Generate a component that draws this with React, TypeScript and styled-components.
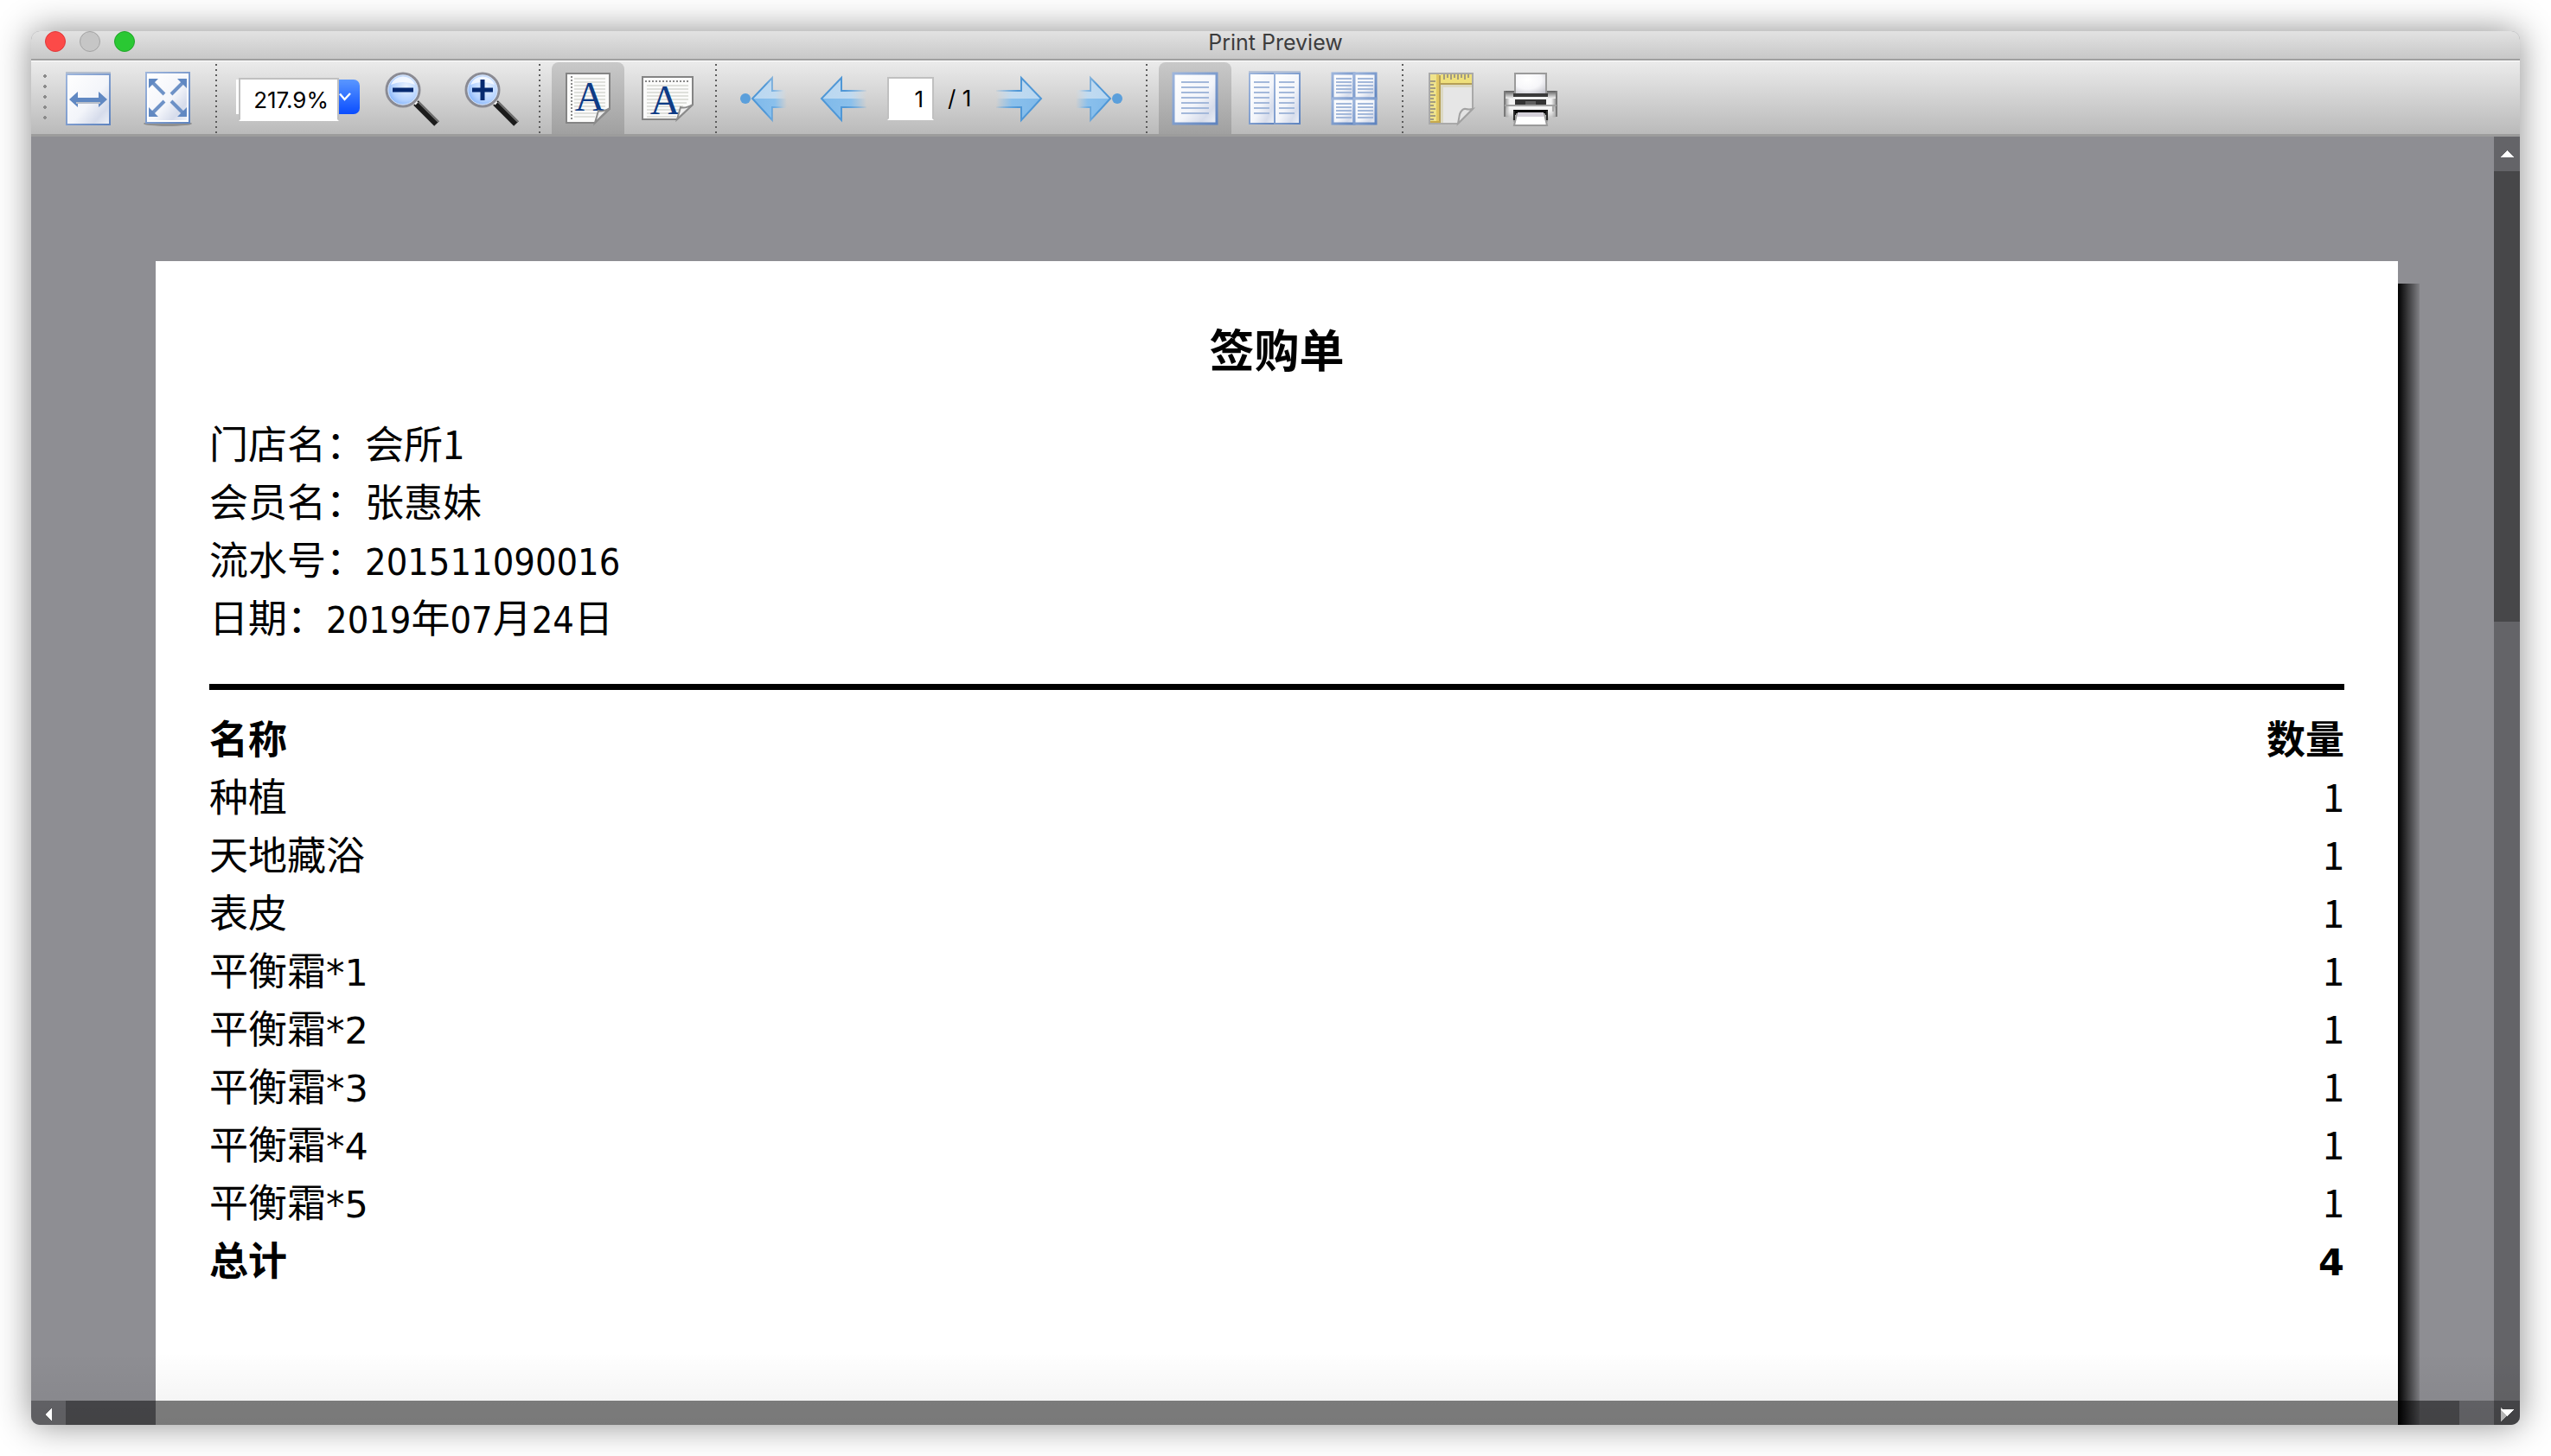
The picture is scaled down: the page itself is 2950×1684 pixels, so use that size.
import React from 'react';
import styled, { createGlobalStyle } from 'styled-components';

const uiFont = `Inter, "Noto Sans CJK SC", sans-serif`;
const paperFont = `"Noto Sans CJK SC", "Noto Sans", sans-serif`;

const Global = createGlobalStyle`
  * { box-sizing: border-box; }
  html, body { margin: 0; background: #fff; }
  button, input { font: inherit; color: inherit; margin: 0; padding: 0; border: 0; }
`;

const Desktop = styled.div`
  height: 100vh;
  padding: 36px;
  overflow: hidden;
  font-family: ${uiFont};
`;

const Window = styled.main`
  height: 100%;
  display: flex;
  flex-direction: column;
  border-radius: 10px;
  box-shadow: 0 0 40px rgba(0, 0, 0, 0.46);
  background: #8e8e93;
`;

const TitleBar = styled.header`
  display: grid;
  grid-template-columns: 1fr auto 1fr;
  align-items: start;
  height: 34px;
  border-radius: 10px 10px 0 0;
  border-bottom: 2px solid #9f9f9f;
  background: linear-gradient(#e2e2e2, #c8c8c8);
`;

const Lights = styled.div`
  display: flex;
  gap: 16px;
  padding-left: 16px;
`;

const Light = styled.button<{ $fill: string; $edge: string }>`
  width: 24px;
  height: 24px;
  border-radius: 50%;
  border: 1px solid ${(p) => p.$edge};
  background: ${(p) => p.$fill};
`;

const Title = styled.h1`
  margin: 0;
  font-size: 25px;
  line-height: 26px;
  font-weight: 400;
  color: #3d3d3d;
`;

const ToolBar = styled.div`
  display: flex;
  align-items: stretch;
  gap: 8px;
  height: 88px;
  padding: 1px 14px 0;
  border-top: 1px solid #fff;
  border-bottom: 3px solid #9c9c9c;
  background: linear-gradient(#ebebeb, #bababa);
`;

const Grip = styled.span`
  flex: none;
  width: 4px;
  height: 60px;
  margin: 10px -2px 0 0;
  background: radial-gradient(circle, #8a8a8a 2px, transparent 2px) 0 0 / 4px 12px repeat-y;
`;

const Separator = styled.span`
  flex: none;
  width: 12px;
  margin: 2px 0 0;
  background: repeating-linear-gradient(#5c5c5c 0 2px, transparent 2px 6px) center / 2px 100% no-repeat;
`;

const Tool = styled.button<{ $active?: boolean }>`
  flex: none;
  width: 84px;
  display: flex;
  align-items: center;
  justify-content: center;
  border-radius: 8px 8px 0 0;
  background: ${(p) => (p.$active ? 'linear-gradient(#c9c9c9, #a0a0a0)' : 'transparent')};

  svg { display: block; width: 64px; height: 64px; }
`;

const Zoom = styled.div`
  display: flex;
  align-items: center;
  width: 162px;
  padding-left: 9px;
`;

const ZoomBox = styled.div`
  display: flex;
  align-items: flex-start;
  height: 48px;
  padding-left: 3px;
  background: linear-gradient(#fff, #fff) 0 2px / 6px 40px no-repeat;
`;

const Field = styled.input<{ $w: number }>`
  width: ${(p) => p.$w}px;
  height: 50px;
  padding: 2px 10px 0 0;
  text-align: right;
  font-size: 26px;
  color: #000;
  background: #fff;
  border: 2px solid #c0c0c0;
  border-bottom-color: #fff;
  border-radius: 0;
  outline: 0;
`;

const DropButton = styled.button`
  display: flex;
  align-items: center;
  width: 24px;
  height: 40px;
  margin-top: 2px;
  border-radius: 0 7px 7px 0;
  background: linear-gradient(#5a97ff, #0a4dff);

  svg { width: 14px; height: 10px; }
`;

const Pager = styled.label`
  display: flex;
  align-items: center;
  gap: 16px;
  width: 102px;
  flex: none;
  font-size: 26px;
  color: #000;
  white-space: nowrap;
`;

const Viewport = styled.section`
  position: relative;
  flex: 1;
  min-height: 0;
  display: flex;
  overflow: hidden;
  padding: 144px 141px 0 144px;
  border-radius: 0 0 10px 10px;
  background: #8e8e93;

  &::after {
    content: '';
    position: absolute;
    inset: auto 0 0 0;
    height: 84px;
    background: linear-gradient(transparent, rgba(0, 0, 0, 0.06));
  }
`;

const Paper = styled.article`
  position: relative;
  flex: 1;
  padding: 64px 62px 0;
  background: #fff;
  color: #000;
  font-family: ${paperFont};
  font-size: 45px;
  line-height: 67px;

  &::after {
    content: '';
    position: absolute;
    left: 100%;
    top: 26px;
    bottom: 0;
    width: 25px;
    background: linear-gradient(90deg, #000, rgba(0, 0, 0, 0.1));
  }
`;

const PaperTitle = styled.h2`
  margin: 0 0 38px;
  font-size: 52px;
  line-height: 74px;
  font-weight: 700;
  text-align: center;
`;

const Facts = styled.div`
  padding-bottom: 45px;
  border-bottom: 7px solid #000;
`;

const Fact = styled.p`
  margin: 0;
`;

const Latin = styled.span<{ $wide?: boolean }>`
  font-family: ${(p) => (p.$wide ? '"DejaVu Sans"' : '"DejaVu Sans Condensed"')}, "DejaVu Sans", sans-serif;
  font-size: 43px;
  line-height: 1;
`;

const Items = styled.table`
  width: 100%;
  margin-top: 21px;
  border-collapse: collapse;

  th, td { padding: 0; height: 67px; text-align: left; }
  th:last-child, td:last-child { text-align: right; }
`;

const Bar = styled.div<{ $vertical?: boolean }>`
  position: absolute;
  z-index: ${(p) => (p.$vertical ? 2 : 1)};
  right: 0;
  bottom: 0;
  display: flex;
  flex-direction: ${(p) => (p.$vertical ? 'column' : 'row')};
  background: rgba(0, 0, 0, 0.29);
  ${(p) => (p.$vertical ? 'top: 0; width: 30px;' : 'left: 0; height: 28px;')}
`;

const BarButton = styled.button<{ $vertical?: boolean; $end?: boolean }>`
  display: flex;
  flex: none;
  align-items: center;
  justify-content: center;
  background: transparent;
  color: #fff;
  ${(p) =>
    p.$vertical
      ? `width: 30px; height: ${p.$end ? 28 : 40}px;`
      : `width: ${p.$end ? 30 : 40}px; height: 28px; padding-top: 4px;`}

  svg { width: 16px; height: 16px; }
`;

const Thumb = styled.div<{ $share: number }>`
  flex: ${(p) => p.$share} 1 0;
  background: rgba(0, 0, 0, 0.29);
`;

const Rest = styled.div<{ $share: number }>`
  flex: ${(p) => p.$share} 1 0;
`;

const Arrow = ({ d }: { d: string }) => (
  <svg viewBox="0 0 16 16" aria-hidden="true" shapeRendering="crispEdges">
    <path d={d} fill="currentColor" />
  </svg>
);

const SheetGradient = ({ id }: { id: string }) => (
  <defs>
    <linearGradient id={id} x1="0" y1="0" x2="1" y2="1">
      <stop offset="0" stopColor="#ffffff" />
      <stop offset="0.55" stopColor="#f3f5fa" />
      <stop offset="0.8" stopColor="#d6dceb" />
      <stop offset="1" stopColor="#eef1f7" />
    </linearGradient>
    <linearGradient id={id + 'e'} x1="0" y1="0" x2="1" y2="1">
      <stop offset="0" stopColor="#9db5dc" />
      <stop offset="1" stopColor="#5f84bf" />
    </linearGradient>
  </defs>
);

const FitWidthIcon = () => (
  <svg viewBox="0 0 64 64">
    <SheetGradient id="fw" />
    <rect x="6" y="1" width="52" height="2" fill="#b5bfce" />
    <rect x="7" y="4" width="50" height="58" fill="url(#fw)" stroke="url(#fwe)" strokeWidth="2" />
    <rect x="18" y="31" width="28" height="5" fill="#6088c2" />
    <path d="M10 33 20 24v18zM54 33 44 24v18z" fill="#6088c2" />
    <rect x="18" y="36" width="28" height="2" fill="#b9bfca" />
  </svg>
);

const FitPageIcon = () => (
  <svg viewBox="0 0 64 64">
    <SheetGradient id="fp" />
    <ellipse cx="32" cy="61" rx="28" ry="3" fill="#8f8f8f" />
    <rect x="7" y="2" width="50" height="58" fill="#fff" stroke="url(#fpe)" strokeWidth="2" />
    <rect x="10" y="5" width="44" height="52" fill="url(#fp)" />
    <g stroke="#6088c2" strokeWidth="4" opacity="0.9">
      <path d="M15 14 28 27M49 14 36 27M15 48 28 35M49 48 36 35" />
    </g>
    <path d="M10 9h11L10 20zM54 9H43l11 11zM10 53h11L10 42zM54 53H43l11-11z" fill="#6088c2" />
  </svg>
);

const LensIcon = ({ plus }: { plus?: boolean }) => {
  const id = plus ? 'lp' : 'lm';
  return (
    <svg viewBox="0 0 64 64">
      <defs>
        <radialGradient id={id} cx="0.6" cy="0.4" r="0.65">
          <stop offset="0" stopColor="#eaf3ff" />
          <stop offset="0.65" stopColor="#b4d2ff" />
          <stop offset="1" stopColor="#79acf8" />
        </radialGradient>
      </defs>
      <path d="M37 37 61 61" stroke="#1c1c1c" strokeWidth="8" />
      <path d="M40 36 63 59" stroke="#747474" strokeWidth="2" />
      <path d="M34 34l4 4" stroke="#ededed" strokeWidth="4" />
      <circle cx="22" cy="22" r="19" fill={`url(#${id})`} stroke="#8b8b93" strokeWidth="3" />
      <circle cx="22" cy="22" r="17" fill="none" stroke="#d9e4f5" strokeWidth="1" />
      <path d="M8 16a15 15 0 0 1 28 0q-14-6-28 0z" fill="#fff" opacity="0.75" />
      <path d="M10 22h24" stroke="#072a70" strokeWidth="5" />
      {plus && <path d="M22 10v24" stroke="#072a70" strokeWidth="5" />}
    </svg>
  );
};

const IconLetter = styled.text`
  font-family: "Liberation Serif", serif;
  font-size: 48px;
  text-anchor: middle;
  fill: #0f3c86;
`;

const PortraitIcon = () => (
  <svg viewBox="0 0 64 64">
    <path d="M7 3h50v41L40 60H7z" fill="#fbfbfa" stroke="#848484" strokeWidth="2" />
    <path d="M16 9h36M16 13h36M16 17h36M16 21h36M16 25h36M16 29h36M16 33h36M16 37h36M16 41h36M16 45h30M16 49h26M16 53h24" stroke="#dfe0dc" strokeWidth="2" />
    <path d="M13 6v50" stroke="#8a8a8a" strokeWidth="2" strokeDasharray="2 2" />
    <IconLetter x="34" y="46">A</IconLetter>
    <path d="M40 60 44 46q5 2 13-3z" fill="#eee" stroke="#8b8b8b" strokeWidth="2" />
  </svg>
);

const LandscapeIcon = () => (
  <svg viewBox="0 0 64 64">
    <path d="M3 7h58v32L43 56H3z" fill="#fbfbfa" stroke="#848484" strokeWidth="2" />
    <path d="M8 17h48M8 21h48M8 25h48M8 29h48M8 33h48M8 37h46M8 41h42M8 45h38M8 49h36M8 53h34" stroke="#dfe0dc" strokeWidth="2" />
    <path d="M6 12h50" stroke="#8a8a8a" strokeWidth="2" strokeDasharray="2 2" />
    <IconLetter x="29" y="50">A</IconLetter>
    <path d="M43 56 47 42q5 2 14-3z" fill="#eee" stroke="#8b8b8b" strokeWidth="2" />
  </svg>
);

const BlueArrowIcon = ({ id, right, stop }: { id: string; right?: boolean; stop?: boolean }) => (
  <svg viewBox="0 0 64 64">
    <defs>
      <linearGradient id={id + 'l'} x1="1" x2="0">
        <stop offset="0" stopColor="#c3dcf1" stopOpacity="0" />
        <stop offset="0.35" stopColor="#c0daf0" />
        <stop offset="1" stopColor="#b8d7f1" />
      </linearGradient>
      <linearGradient id={id + 'd'} x1="1" x2="0">
        <stop offset="0" stopColor="#8ac0ec" stopOpacity="0" />
        <stop offset="0.35" stopColor="#8ac0ec" />
        <stop offset="1" stopColor="#7fb9ea" />
      </linearGradient>
      <linearGradient id={id + 's'} gradientUnits="userSpaceOnUse" x1={stop ? 54 : 60} x2="33" y1="0" y2="0">
        <stop offset="0" stopColor="#4f97d6" stopOpacity="0" />
        <stop offset="1" stopColor="#4f97d6" />
      </linearGradient>
    </defs>
    <g transform={right ? 'translate(64 0) scale(-1 1)' : undefined}>
      {stop ? (
        <>
          <circle cx="10" cy="32" r="6" fill="#5b9fdb" />
          <path d="M18 32 41 8v14h17v10z" fill={`url(#${id}l)`} />
          <path d="M18 32h40v11H41v15z" fill={`url(#${id}d)`} />
          <path d="M58 23H41V8L18 32l23 25V42h17" fill="none" stroke={`url(#${id}s)`} strokeWidth="2" />
        </>
      ) : (
        <>
          <path d="M6 32 29 8v14h29v10z" fill={`url(#${id}l)`} />
          <path d="M6 32h52v11H29v15z" fill={`url(#${id}d)`} />
          <path d="M58 23H29V8L6 32l23 25V42h29" fill="none" stroke={`url(#${id}s)`} strokeWidth="2" />
        </>
      )}
    </g>
  </svg>
);

const SinglePageIcon = () => (
  <svg viewBox="0 0 64 64">
    <SheetGradient id="sp" />
    <rect x="7" y="3" width="50" height="58" fill="url(#sp)" stroke="url(#spe)" strokeWidth="3" />
    <path d="M16 13h32M16 19h32M16 25h32M16 31h32M16 37h32M16 43h32M16 49h32" stroke="#a3b8da" strokeWidth="2" />
  </svg>
);

const FacingIcon = () => (
  <svg viewBox="0 0 64 64">
    <SheetGradient id="fc" />
    <rect x="2" y="0" width="60" height="2" fill="#b9c4d6" />
    {[3, 32].map((x) => (
      <g key={x}>
        <rect x={x} y="3" width="29" height="58" fill="url(#fc)" stroke="url(#fce)" strokeWidth="2" />
        <path d="M0 13h18M0 19h18M0 25h18M0 31h18M0 37h18M0 43h18M0 49h18" transform={`translate(${x + 5} 0)`} stroke="#a3b8da" strokeWidth="2" />
      </g>
    ))}
  </svg>
);

const OverviewIcon = () => (
  <svg viewBox="0 0 64 64">
    <SheetGradient id="ov" />
    {[[7, 3], [32, 3], [7, 32], [32, 32]].map(([x, y]) => (
      <g key={`${x}-${y}`}>
        <rect x={x} y={y} width="25" height="29" fill="url(#ov)" stroke="url(#ove)" strokeWidth="3" />
        <path d="M0 6h18M0 10h18M0 14h18M0 18h18M0 22h18" transform={`translate(${x + 4} ${y})`} stroke="#a3b8da" strokeWidth="2" />
      </g>
    ))}
  </svg>
);

const PageSetupIcon = () => (
  <svg viewBox="0 0 64 64">
    <path d="M7 3h50v41L40 61H7z" fill="#e6e6e6" stroke="#a9a9a9" strokeWidth="2" />
    <path d="M20 16h36v3H23v41h-3z" fill="#dcd9c4" />
    <path d="M20 4h36v11H20z" fill="#efe07c" />
    <path d="M8 4h11v56H8z" fill="#efe38c" />
    <path d="M15 4h3v56h-3z" fill="#e2c862" />
    <path d="M20 15h36M19 5v55" stroke="#b59f58" strokeWidth="2" fill="none" />
    <path d="M8 59h11" stroke="#c7a94d" strokeWidth="2" />
    <path d="M24 4v6M28 4v4M32 4v6M36 4v4M40 4v6M44 4v4M48 4v6M52 4v4M8 12h6M8 16h4M8 20h6M8 24h4M8 28h6M8 32h4M8 36h6M8 40h4M8 44h6M8 48h4M8 52h6M8 56h4" stroke="#a39c80" strokeWidth="2" />
    <path d="M40 61 42 50q3-7 7-6t8 0z" fill="#e3e3e3" stroke="#a2a2a2" strokeWidth="2" />
  </svg>
);

const PrinterIcon = () => (
  <svg viewBox="0 0 64 64">
    <defs>
      <radialGradient id="prp" cx="0.4" cy="0.3" r="0.9">
        <stop offset="0" stopColor="#ffffff" />
        <stop offset="0.5" stopColor="#f6f6f9" />
        <stop offset="1" stopColor="#b9b9c2" />
      </radialGradient>
      <linearGradient id="prt" x1="0" y1="0" x2="0" y2="1">
        <stop offset="0" stopColor="#5a5a5a" />
        <stop offset="0.5" stopColor="#a8a8a8" />
        <stop offset="1" stopColor="#f4f4f4" />
      </linearGradient>
      <linearGradient id="prs" x1="0" x2="1">
        <stop offset="0" stopColor="#8b8b8b" />
        <stop offset="0.1" stopColor="#f4f4f4" />
        <stop offset="0.9" stopColor="#f4f4f4" />
        <stop offset="1" stopColor="#8b8b8b" />
      </linearGradient>
      <linearGradient id="prb" x1="0" y1="0" x2="0" y2="1">
        <stop offset="0" stopColor="#ffffff" stopOpacity="0" />
        <stop offset="1" stopColor="#7d7d7d" />
      </linearGradient>
    </defs>
    <path d="M2 23h60v30l-8 1-3 6H13l-3-6-8-1z" fill="url(#prs)" />
    <path d="M2 41h60v12l-8 1-3 6H13l-3-6-8-1z" fill="url(#prb)" />
    <rect x="2" y="23" width="60" height="9" fill="url(#prt)" />
    <path d="M2 23v30M62 23v30" stroke="#7a7a7a" strokeWidth="2" />
    <rect x="14" y="3" width="36" height="24" fill="url(#prp)" stroke="#9a9a9a" strokeWidth="2" />
    <rect x="12" y="26" width="40" height="4" fill="#3a3a3a" />
    <rect x="12" y="30" width="40" height="3" fill="#f1f1f1" />
    <rect x="14" y="33" width="36" height="6" fill="#333" />
    <rect x="26" y="35" width="12" height="4" fill="#5f5f5f" />
    <rect x="2" y="39" width="60" height="2" fill="#a2a2a2" />
    <rect x="57" y="41" width="2" height="6" fill="#aaa" />
    <rect x="12" y="45" width="40" height="6" fill="#0a0a0a" />
    <path d="M16 50h32l3 13H13z" fill="#fff" stroke="#9a9a9a" strokeWidth="2" />
    <path d="M17 48h30v5H17z" fill="#d4d0d9" />
    <path d="M13 46v11M51 46v11" stroke="#2a2a2a" strokeWidth="2" />
  </svg>
);

const facts = [
  { label: '门店名', value: '会所1' },
  { label: '会员名', value: '张惠妹' },
  { label: '流水号', value: <Latin>201511090016</Latin> },
  { label: '日期', value: <><Latin>2019</Latin>年<Latin>07</Latin>月<Latin>24</Latin>日</> },
];

const items = [
  { name: '种植', count: 1 },
  { name: '天地藏浴', count: 1 },
  { name: '表皮', count: 1 },
  { name: '平衡霜', suffix: '*1', count: 1 },
  { name: '平衡霜', suffix: '*2', count: 1 },
  { name: '平衡霜', suffix: '*3', count: 1 },
  { name: '平衡霜', suffix: '*4', count: 1 },
  { name: '平衡霜', suffix: '*5', count: 1 },
];

export default function App() {
  return (
    <Desktop>
      <Global />
      <Window>
        <TitleBar>
          <Lights>
            <Light $fill="#fc4a48" $edge="#e0383a" aria-label="Close" />
            <Light $fill="#c6c6c6" $edge="#a3a3a3" aria-label="Minimize" />
            <Light $fill="#2ac833" $edge="#1fa528" aria-label="Full screen" />
          </Lights>
          <Title>Print Preview</Title>
        </TitleBar>

        <ToolBar role="toolbar" aria-label="Print preview">
          <Grip />
          <Tool aria-label="Fit width"><FitWidthIcon /></Tool>
          <Tool aria-label="Fit page"><FitPageIcon /></Tool>
          <Separator />
          <Zoom>
            <ZoomBox>
              <Field $w={116} aria-label="Zoom" defaultValue="217.9%" />
              <DropButton aria-label="Zoom levels">
                <svg viewBox="0 0 14 10"><path d="M1 1.5 6.5 8 13 1" fill="none" stroke="#fff" strokeWidth="2.4" /></svg>
              </DropButton>
            </ZoomBox>
          </Zoom>
          <Tool aria-label="Zoom out"><LensIcon /></Tool>
          <Tool aria-label="Zoom in"><LensIcon plus /></Tool>
          <Separator />
          <Tool $active aria-pressed="true" aria-label="Portrait"><PortraitIcon /></Tool>
          <Tool aria-label="Landscape"><LandscapeIcon /></Tool>
          <Separator />
          <Tool aria-label="First page"><BlueArrowIcon id="first" stop /></Tool>
          <Tool aria-label="Previous page"><BlueArrowIcon id="prev" /></Tool>
          <Pager>
            <Field $w={54} aria-label="Page" defaultValue="1" />
            <span>/ 1</span>
          </Pager>
          <Tool aria-label="Next page"><BlueArrowIcon id="next" right /></Tool>
          <Tool aria-label="Last page"><BlueArrowIcon id="last" right stop /></Tool>
          <Separator />
          <Tool $active aria-pressed="true" aria-label="Single page"><SinglePageIcon /></Tool>
          <Tool aria-label="Facing pages"><FacingIcon /></Tool>
          <Tool aria-label="All pages"><OverviewIcon /></Tool>
          <Separator />
          <Tool aria-label="Page setup"><PageSetupIcon /></Tool>
          <Tool aria-label="Print"><PrinterIcon /></Tool>
        </ToolBar>

        <Viewport>
          <Paper>
            <PaperTitle>签购单</PaperTitle>
            <Facts>
              {facts.map(({ label, value }) => (
                <Fact key={label}>{label}：{value}</Fact>
              ))}
            </Facts>
            <Items>
              <thead>
                <tr><th>名称</th><th>数量</th></tr>
              </thead>
              <tbody>
                {items.map(({ name, suffix, count }) => (
                  <tr key={name + suffix}>
                    <td>{name}{suffix && <Latin $wide>{suffix}</Latin>}</td>
                    <td>{count}</td>
                  </tr>
                ))}
              </tbody>
              <tfoot>
                <tr><th>总计</th><th><Latin $wide>4</Latin></th></tr>
              </tfoot>
            </Items>
          </Paper>
          <Bar>
            <BarButton aria-label="Scroll left"><Arrow d="M4 8 12 0v16z" /></BarButton>
            <Thumb $share={2768} />
            <Rest $share={40} />
            <BarButton $end aria-label="Scroll right"><Arrow d="M1 0 9 8 1 16z" /></BarButton>
          </Bar>
          <Bar $vertical>
            <BarButton $vertical aria-label="Scroll up"><Arrow d="M0 12 8 4l8 8z" /></BarButton>
            <Thumb $share={521} />
            <Rest $share={901} />
            <BarButton $vertical $end aria-label="Scroll down"><Arrow d="M0 4h16l-8 8z" /></BarButton>
          </Bar>
        </Viewport>
      </Window>
    </Desktop>
  );
}
